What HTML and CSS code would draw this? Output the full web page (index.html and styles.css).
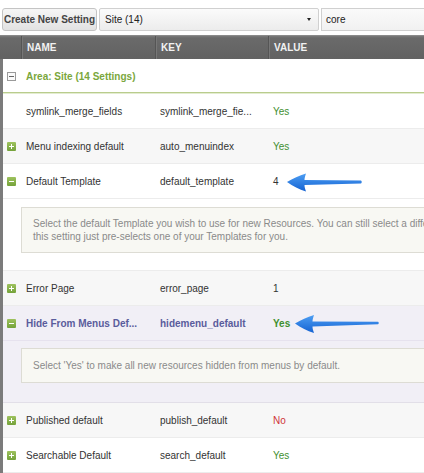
FILE: index.html
```html
<!DOCTYPE html>
<html lang="en">
<head>
<meta charset="utf-8">
<title>System Settings</title>
<link rel="stylesheet" href="styles.css">
</head>
<body>
<div class="page">
  <div class="toolbar">
    <button class="btn">Create New Setting</button>
    <div class="select">
      <span class="select-text">Site (14)</span>
      <span class="select-arrow"></span>
    </div>
    <div class="input">core</div>
  </div>

  <div class="grid">
    <div class="head">
      <div class="hcell hcell-icon"></div>
      <div class="hcell">NAME</div>
      <div class="hcell">KEY</div>
      <div class="hcell">VALUE</div>
    </div>

    <div class="group">
      <span class="gicon"></span>
      <span class="gtitle">Area: Site (14 Settings)</span>
    </div>

    <div class="row">
      <div class="c-icon"></div>
      <div class="c-name">symlink_merge_fields</div>
      <div class="c-key">symlink_merge_fie...</div>
      <div class="c-val yes">Yes</div>
    </div>

    <div class="row alt">
      <div class="c-icon"><span class="ico plus"></span></div>
      <div class="c-name">Menu indexing default</div>
      <div class="c-key">auto_menuindex</div>
      <div class="c-val yes">Yes</div>
    </div>

    <div class="row">
      <div class="c-icon"><span class="ico minus"></span></div>
      <div class="c-name">Default Template</div>
      <div class="c-key">default_template</div>
      <div class="c-val">4</div>
    </div>
    <div class="expand expand-tall">
      <div class="desc"><span class="line">Select the default Template you wish to use for new Resources. You can still select a different one,</span><span class="line">this setting just pre-selects one of your Templates for you.</span></div>
    </div>

    <div class="row alt">
      <div class="c-icon"><span class="ico plus"></span></div>
      <div class="c-name">Error Page</div>
      <div class="c-key">error_page</div>
      <div class="c-val">1</div>
    </div>

    <div class="row selected">
      <div class="c-icon"><span class="ico minus"></span></div>
      <div class="c-name">Hide From Menus Def...</div>
      <div class="c-key">hidemenu_default</div>
      <div class="c-val yes">Yes</div>
    </div>
    <div class="expand expand-sel">
      <div class="desc"><span class="line">Select 'Yes' to make all new resources hidden from menus by default.</span></div>
    </div>

    <div class="row alt">
      <div class="c-icon"><span class="ico plus"></span></div>
      <div class="c-name">Published default</div>
      <div class="c-key">publish_default</div>
      <div class="c-val no">No</div>
    </div>

    <div class="row">
      <div class="c-icon"><span class="ico plus"></span></div>
      <div class="c-name">Searchable Default</div>
      <div class="c-key">search_default</div>
      <div class="c-val yes">Yes</div>
    </div>

    <div class="row alt">
      <div class="c-icon"></div>
      <div class="c-name"></div>
      <div class="c-key"></div>
      <div class="c-val"></div>
    </div>
  </div>

  <svg class="arrow arrow-1" width="80" height="22" viewBox="0 0 80 22">
    <defs>
      <linearGradient id="ag1" x1="0" y1="0" x2="0" y2="1">
        <stop offset="0" stop-color="#4d9ef3"/>
        <stop offset="1" stop-color="#1462d2"/>
      </linearGradient>
    </defs>
    <path d="M1 10 C7 6.5 13 3.5 20 1.5 C19 4.5 18.5 6 18.5 8 L75 8.6 C76 9.2 76 11 75 11.4 L18.5 13 C18.5 15 19 16.5 20 19.5 C13 17.5 7 14 1 10 Z" fill="url(#ag1)"/>
  </svg>
  <svg class="arrow arrow-2" width="88" height="22" viewBox="0 0 88 22">
    <defs>
      <linearGradient id="ag2" x1="0" y1="0" x2="0" y2="1">
        <stop offset="0" stop-color="#4d9ef3"/>
        <stop offset="1" stop-color="#1462d2"/>
      </linearGradient>
    </defs>
    <path d="M1 10.5 C7 7 13 4 20 2 C19 5 18.5 6.5 18.5 8.5 L84 8.8 C85 9.4 85 10.8 84 11.2 L18.5 13.5 C18.5 15.5 19 17 20 20 C13 18 7 14.5 1 10.5 Z" fill="url(#ag2)"/>
  </svg>
</div>
</body>
</html>
```

FILE: styles.css
```css
html, body {
  margin: 0;
  padding: 0;
  background: #ffffff;
  overflow: hidden;
}

body {
  font-family: "Liberation Sans", Arial, Helvetica, sans-serif;
  font-size: 10px;
  color: #333333;
}

.page {
  position: relative;
  width: 424px;
  height: 473px;
  overflow: hidden;
}

/* toolbar */
.toolbar {
  display: flex;
  align-items: stretch;
  gap: 2px;
  padding: 8px 0 0 2px;
  height: 23px;
  width: 480px;
}

.btn {
  font-family: inherit;
  font-size: 10px;
  font-weight: bold;
  color: #444;
  height: 23px;
  width: 95px;
  padding: 0;
  border: 1px solid #c4c4c4;
  border-radius: 3px;
  background: linear-gradient(#f6f6f6, #e2e2e2);
  box-sizing: border-box;
}

.select {
  display: flex;
  align-items: center;
  width: 220px;
  height: 23px;
  box-sizing: border-box;
  border: 1px solid #d0d0d0;
  border-radius: 2px;
  background: linear-gradient(#fbfbfb, #ececec);
  padding-left: 5px;
  position: relative;
}

.select-text {
  flex: 1;
  color: #222;
}

.select-arrow {
  width: 0;
  height: 0;
  border-left: 2.5px solid transparent;
  border-right: 2.5px solid transparent;
  border-top: 3px solid #222;
  margin-right: 7px;
}

.input {
  flex: 1;
  height: 23px;
  box-sizing: border-box;
  border: 1px solid #d0d0d0;
  background: linear-gradient(#fafafa, #f1f1f1);
  padding-left: 4px;
  display: flex;
  align-items: center;
  color: #222;
}

/* grid */
.grid {
  margin-top: 4px;
  width: 480px;
  border-left: 3px solid #7b7b7b;
}

.head,
.row {
  display: grid;
  grid-template-columns: 18px 134px 113px 1fr;
}

.head {
  height: 24px;
  background: linear-gradient(#7a7a7a 0, #6a6a6a 2px, #626262 100%);
  border-top: 1px solid #8a8a8a;
  box-sizing: border-box;
  margin-left: -3px;
  padding-left: 3px;
}

.hcell {
  display: flex;
  align-items: center;
  padding-left: 5px;
  color: #f2f2f2;
  font-weight: bold;
  border-left: 1px solid #555;
  box-shadow: inset 1px 0 0 #777;
}

.hcell-icon {
  border-left: none;
  box-shadow: none;
}

.group {
  display: flex;
  align-items: center;
  height: 34px;
  padding-top: 2px;
  box-sizing: border-box;
  border-bottom: 1px solid #b9cc8d;
  box-shadow: 0 1px 0 #e3ecd0;
  position: relative;
  z-index: 1;
  background: #fff;
  margin-bottom: 1px;
}

.gicon {
  width: 7px;
  height: 7px;
  border: 1px solid #9a9a9a;
  margin-left: 4px;
  margin-right: 10px;
  position: relative;
  background: #fafafa;
}

.gicon::after {
  content: "";
  position: absolute;
  left: 1px;
  right: 1px;
  top: 3px;
  height: 1px;
  background: #666;
}

.gtitle {
  color: #7aa73c;
  font-weight: bold;
}

.row {
  height: 35px;
  box-sizing: border-box;
  border-bottom: 1px solid #ececec;
  background: #ffffff;
  padding-top: 1px;
}

.row.alt {
  background: #f7f7f7;
}

.row.selected {
  background: #f1eff6;
  border-bottom-color: #e6e2ee;
}

.row > div {
  display: flex;
  align-items: center;
  padding-left: 5px;
  white-space: nowrap;
  overflow: hidden;
}

.row > .c-icon {
  padding-left: 4px;
}

.ico {
  width: 9px;
  height: 9px;
  background: linear-gradient(#9ec25e, #74a23a);
  border-radius: 1px;
  position: relative;
  display: block;
}

.ico::before {
  content: "";
  position: absolute;
  left: 2px;
  right: 2px;
  top: 4px;
  height: 1px;
  background: #fff;
}

.ico.plus::after {
  content: "";
  position: absolute;
  top: 2px;
  bottom: 2px;
  left: 4px;
  width: 1px;
  background: #fff;
}

.yes {
  color: #3f8f2f;
}

.no {
  color: #d0343a;
}

.selected .c-name,
.selected .c-key {
  color: #5a5c9c;
  font-weight: bold;
}

.selected .c-val {
  font-weight: bold;
}

.expand {
  padding: 8px 0 17px 18px;
  border-bottom: 1px solid #ececec;
  background: #fff;
}

.expand-sel {
  background: #f1eff6;
  padding: 7px 0 19px 18px;
  border-bottom-color: #e2dfe8;
}

.desc {
  border: 1px solid #dddcd4;
  background: #f8f8f3;
  color: #8a8a8a;
  padding: 9px 11px;
  line-height: 13px;
  width: 440px;
}

.line {
  display: block;
  white-space: nowrap;
}

.expand-sel .desc {
  padding: 10px 11px;
}

.arrow {
  position: absolute;
}

.arrow-1 {
  left: 286px;
  top: 172px;
}

.arrow-2 {
  left: 294px;
  top: 313px;
}
```
